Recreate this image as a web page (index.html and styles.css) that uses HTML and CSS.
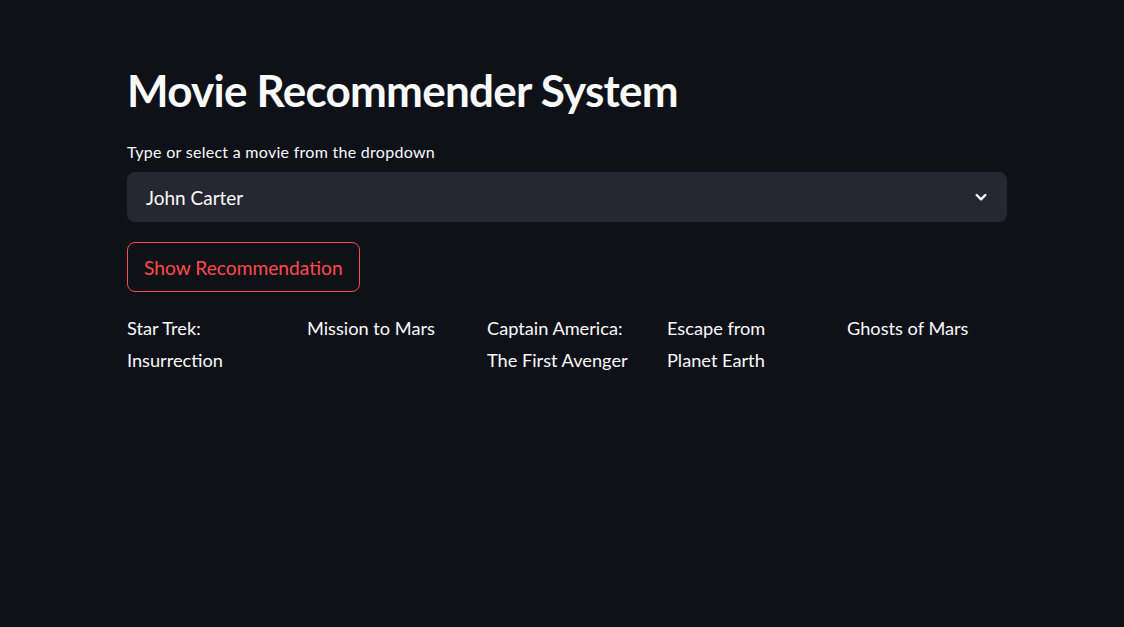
FILE: index.html
```html
<!DOCTYPE html>
<html>
<head>
<meta charset="utf-8">
<link rel="stylesheet" href="styles.css">
</head>
<body>
<main class="page">
  <h1 class="title">Movie Recommender System</h1>
  <label class="label">Type or select a movie from the dropdown</label>
  <div class="select">
    <span class="select-value">John Carter</span>
    <svg class="chevron" width="16" height="16" viewBox="0 0 24 24"><path d="M5.5 9l6.5 6.5 6.5-6.5" fill="none" stroke="#fafafa" stroke-width="3.6" stroke-linecap="round" stroke-linejoin="round"/></svg>
  </div>
  <button class="btn">Show Recommendation</button>
  <div class="cols">
    <div class="col">Star Trek:<br>Insurrection</div>
    <div class="col">Mission to Mars</div>
    <div class="col">Captain America:<br>The First Avenger</div>
    <div class="col">Escape from<br>Planet Earth</div>
    <div class="col">Ghosts of Mars</div>
  </div>
</main>
</body>
</html>
```
FILE: styles.css
```css
html, body {
  margin: 0;
  padding: 0;
  background: #0e1117;
  height: 100%;
}
body {
  font-family: "Lato", "Noto Sans", sans-serif;
  color: #fafafa;
}
.page {
  width: 880px;
  margin-left: 127px;
  padding-top: 62px;
  display: flex;
  flex-direction: column;
  align-items: stretch;
}
.title {
  margin: 0;
  font-size: 44px;
  font-weight: 700;
  line-height: 56px;
  letter-spacing: -0.75px;
}
.label {
  margin-top: 24px;
  font-size: 16px;
  line-height: 20px;
  height: 20px;
  letter-spacing: 0.28px;
}
.select {
  margin-top: 10px;
  height: 50px;
  background: #262730;
  border-radius: 8px;
  display: flex;
  align-items: center;
  justify-content: space-between;
  padding: 0 18px 0 19px;
}
.select-value {
  font-size: 19px;
}
.chevron {
  display: block;
}
.btn {
  align-self: flex-start;
  margin-top: 20px;
  height: 50px;
  padding: 0 16px;
  background: transparent;
  border: 1px solid #ff4b4b;
  border-radius: 8px;
  color: #ff4b4b;
  font-family: inherit;
  font-size: 19.2px;
}
.cols {
  margin-top: 20px;
  display: grid;
  grid-template-columns: repeat(5, 160px);
  column-gap: 20px;
  font-size: 18.2px;
  line-height: 32px;
}
```
